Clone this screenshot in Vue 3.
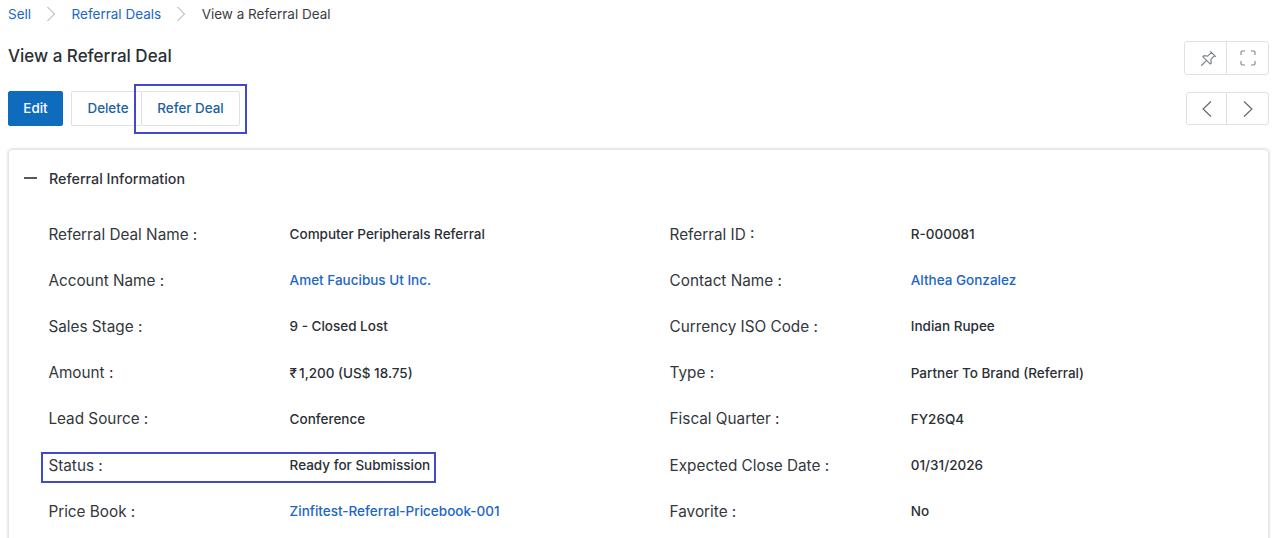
<template>
  <div class="page">
    <nav class="crumbs">
      <a class="link">Sell</a>
      <svg class="sep" viewBox="0 0 10 16"><path d="M1.5 1l7 7-7 7" /></svg>
      <a class="link">Referral Deals</a>
      <svg class="sep" viewBox="0 0 10 16"><path d="M1.5 1l7 7-7 7" /></svg>
      <span class="current">View a Referral Deal</span>
    </nav>

    <header class="title-row">
      <h1>View a Referral Deal</h1>
      <div class="icon-group top">
        <button class="icon-btn wide" aria-label="Pin">
          <svg viewBox="0 0 16 16" width="17" height="17">
            <path d="M9.500 1l5.500 5.500M10.800 2.200L7.200 5.800 3.800 5.400 2.800 6.400 9.600 13.200l1-1-.4-3.400 3.600-3.600M6 10L1.200 14.800" />
          </svg>
        </button>
        <button class="icon-btn" aria-label="Fullscreen">
          <svg viewBox="0 0 16 16" width="16" height="16">
            <path d="M1 5V2.500A1.500 1.500 0 0 1 2.500 1H5M11 1h2.500A1.500 1.500 0 0 1 15 2.500V5M15 11v2.500a1.500 1.500 0 0 1-1.500 1.500H11M5 15H2.500A1.500 1.500 0 0 1 1 13.500V11" />
          </svg>
        </button>
      </div>
    </header>

    <div class="action-row">
      <div class="actions">
        <button class="btn primary">Edit</button>
        <button class="btn delete">Delete</button>
        <button class="btn refer">Refer Deal</button>
        <span class="mark mark-refer"></span>
      </div>
      <div class="icon-group nav">
        <button class="icon-btn" aria-label="Previous">
          <svg viewBox="0 0 12 18" width="12" height="18"><path d="M10 1.500L2 9l8 7.500" /></svg>
        </button>
        <button class="icon-btn" aria-label="Next">
          <svg viewBox="0 0 12 18" width="12" height="18"><path d="M2 1.500L10 9l-8 7.500" /></svg>
        </button>
      </div>
    </div>

    <section class="card">
      <div class="card-head">
        <span class="dash"></span>
        <h2>Referral Information</h2>
      </div>
      <div class="grid">
        <div v-for="f in fields" :key="f.label" class="field">
          <span class="label">{{ f.label }} :</span>
          <span class="value" :class="{ link: f.link }">
            <template v-if="f.rupee"><span class="rupee">₹</span></template>{{ f.value }}
          </span>
          <span v-if="f.mark" class="mark mark-status"></span>
        </div>
      </div>
    </section>
  </div>
</template>

<script setup>
const fields = [
  { label: 'Referral Deal Name', value: 'Computer Peripherals Referral' },
  { label: 'Referral ID', value: 'R-000081' },
  { label: 'Account Name', value: 'Amet Faucibus Ut Inc.', link: true },
  { label: 'Contact Name', value: 'Althea Gonzalez', link: true },
  { label: 'Sales Stage', value: '9 - Closed Lost' },
  { label: 'Currency ISO Code', value: 'Indian Rupee' },
  { label: 'Amount', value: '1,200 (US$ 18.75)', rupee: true },
  { label: 'Type', value: 'Partner To Brand (Referral)' },
  { label: 'Lead Source', value: 'Conference' },
  { label: 'Fiscal Quarter', value: 'FY26Q4' },
  { label: 'Status', value: 'Ready for Submission', mark: true },
  { label: 'Expected Close Date', value: '01/31/2026' },
  { label: 'Price Book', value: 'Zinfitest-Referral-Pricebook-001', link: true },
  { label: 'Favorite', value: 'No' }
]
</script>

<style>
html, body { margin: 0; height: 538px; overflow: hidden; background: #fff; }
</style>

<style scoped>
.page {
  height: 538px;
  overflow: hidden;
  padding: 0 8px;
  box-sizing: border-box;
  font-family: Inter, "Liberation Sans", sans-serif;
  color: #2b2f36;
}
.link { color: #1a66c9; }
.crumbs {
  display: flex;
  align-items: center;
  height: 27px;
  font-size: 13.500px;
}
.crumbs .sep {
  width: 10px;
  height: 16px;
  margin: 0 16px 0 14.500px;
  fill: none;
  stroke: #9aa0a8;
  stroke-width: 1;
}
.current { color: #3a3d42; }
.title-row {
  display: flex;
  justify-content: space-between;
  align-items: center;
  margin-top: 14px;
  height: 34px;
}
h1 {
  margin: 0 0 4px;
  font-size: 17px;
  font-weight: 500;
  color: #2b2f36;
}
.icon-group {
  display: flex;
  border: 1px solid #dde2ea;
  border-radius: 3px;
  background: #fff;
}
.icon-btn {
  width: 42px;
  padding: 0;
  border: 0;
  background: none;
  display: flex;
  align-items: center;
  justify-content: center;
}
.icon-btn + .icon-btn { border-left: 1px solid #dde2ea; }
.icon-btn svg { fill: none; stroke: #7c838c; stroke-width: 1.100; }
.icon-group.nav .icon-btn svg { stroke: #5c636c; }
.icon-group.top { height: 32px; }
.icon-group.top .wide { width: 41px; padding-left: 5px; box-sizing: border-box; }
.icon-group.nav { height: 31px; margin-top: 1px; }
.icon-group.nav .icon-btn:first-child { width: 39px; }
.action-row {
  display: flex;
  justify-content: space-between;
  align-items: flex-start;
  margin-top: 16px;
}
.actions {
  position: relative;
  display: flex;
}
.btn {
  height: 35px;
  box-sizing: border-box;
  font: 500 13.400px Inter, "Liberation Sans", sans-serif;
  border-radius: 2px;
  padding: 0 0 2px;
  color: #20609f;
  background: #fff;
  border: 1px solid #dde2ea;
}
.primary {
  width: 55px;
  background: #0f6cbd;
  border-color: #0f6cbd;
  color: #fff;
  margin-right: 8px;
}
.delete { width: 71px; border-right: 0; padding-left: 2px; }
.refer { width: 99px; margin-left: -1px; }
.mark {
  position: absolute;
  box-sizing: border-box;
  border: 2px solid #4347c9;
  pointer-events: none;
}
.mark-refer { left: 126px; top: -7px; width: 113px; height: 50px; }
.card {
  margin-top: 23px;
  width: 1261px;
  height: 400px;
  box-sizing: border-box;
  border: 1px solid #e3e5e9;
  border-radius: 4px;
  box-shadow: 0 0 3px rgba(0, 0, 0, 0.2);
  padding: 0 0 0 15px;
}
.card-head {
  display: flex;
  align-items: center;
  height: 56px;
}
.dash {
  width: 13px;
  height: 1.500px;
  background: #555a61;
  margin-right: 12px;
}
h2 {
  margin: 0;
  font-size: 14.300px;
  font-weight: 500;
  color: #2f3338;
}
.grid {
  display: grid;
  grid-template-columns: 621.200px 1fr;
  grid-auto-rows: 46.200px;
  padding: 5px 0 0 24.400px;
}
.field {
  position: relative;
  display: flex;
  align-items: center;
  height: 46.200px;
}
.label {
  width: 241.200px;
  flex: none;
  font-size: 15.300px;
  color: #33373c;
}
.value {
  font-size: 13.500px;
  font-weight: 500;
  color: #2b2f36;
}
.value.link { color: #1a66c9; }
.rupee { margin-right: 2px; }
.mark-status {
  left: -7.400px;
  top: 10px;
  width: 395px;
  height: 31px;
}
</style>
